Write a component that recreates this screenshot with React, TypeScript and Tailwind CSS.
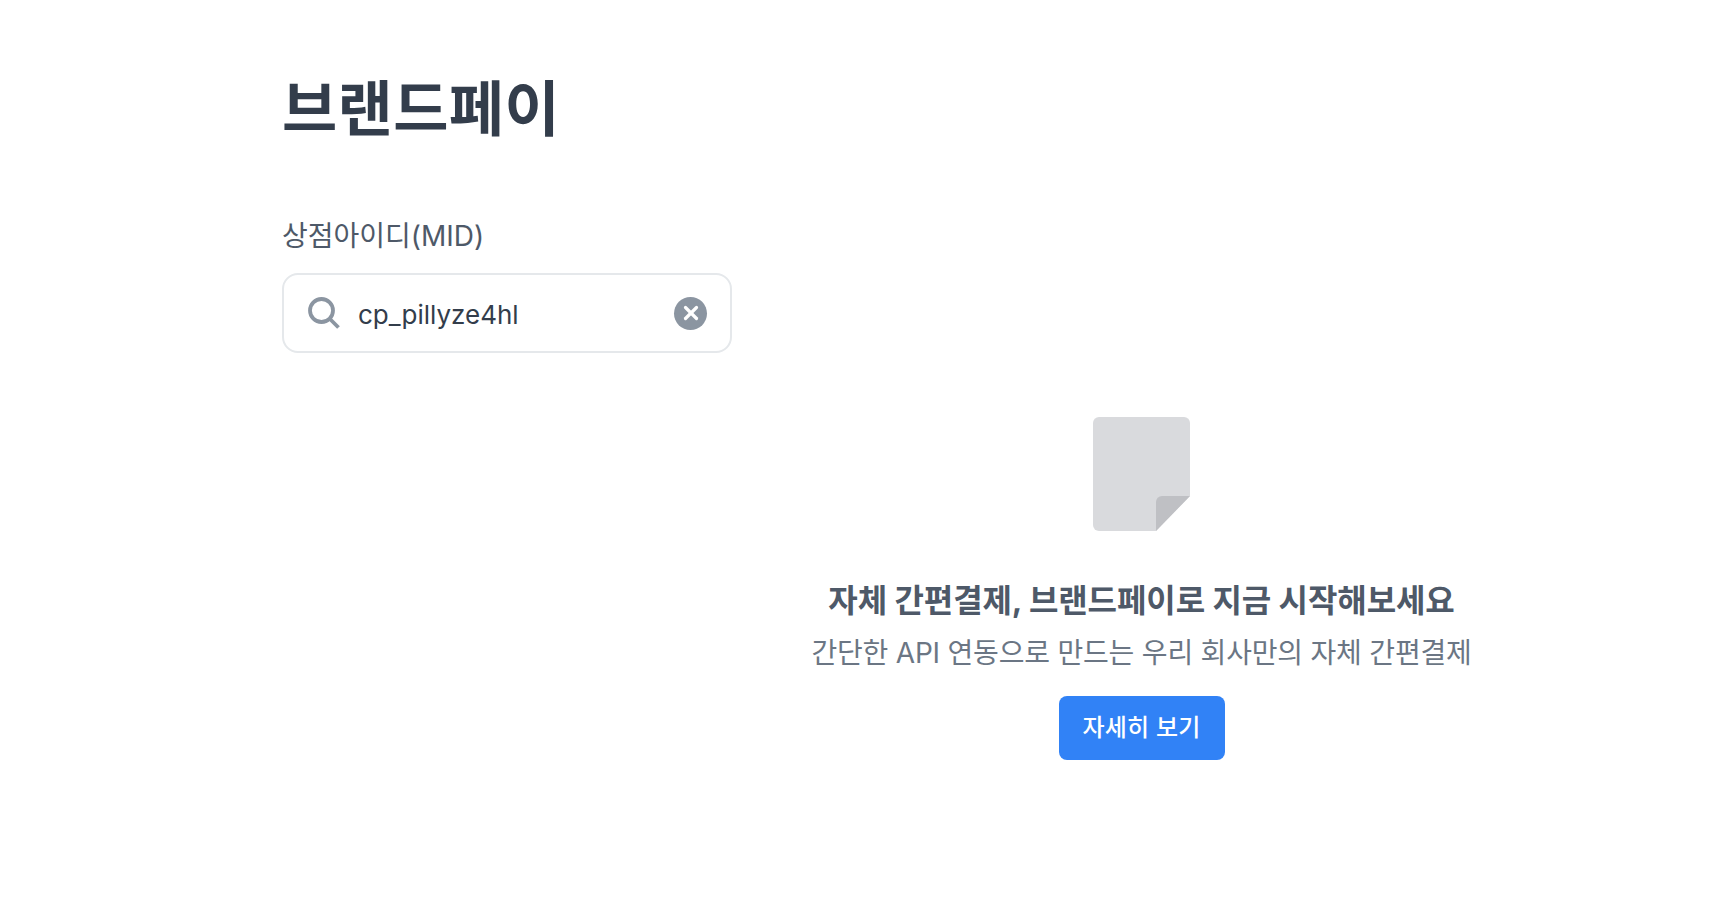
import { X } from 'lucide-react'

export default function App() {
  return (
    <div className="min-h-[922px] bg-white pl-[282px] pt-[67px] font-['Inter','Noto_Sans_CJK_KR',sans-serif]">
      <h1 className="text-[60px] leading-[84px] font-bold tracking-[0.4px] text-[#333d4b]">브랜드페이</h1>

      <div className="flex">
        <div className="w-[450px] shrink-0 pt-[65px]">
          <label className="block text-[28px] leading-[40px] text-[#4e5968]">상점아이디(MID)</label>
          <div className="mt-[17px] flex h-[80px] items-center rounded-[16px] border-2 border-[#e5e8eb] pl-[24px] pr-[23px]">
            <svg width="32" height="32" viewBox="0 0 32 32" fill="none" className="shrink-0">
              <circle cx="13.5" cy="13.5" r="11.5" stroke="#8b95a1" strokeWidth="3.8" />
              <path d="M22 22l8.5 8.5" stroke="#8b95a1" strokeWidth="3.8" />
            </svg>
            <span className="ml-[18px] flex-1 pt-[2px] text-[26px] text-[#333d4b]">cp_pillyze4hl</span>
            <div className="flex h-[33px] w-[33px] items-center justify-center rounded-full bg-[#8b95a1]">
              <X size={22} strokeWidth={3.5} className="text-white" />
            </div>
          </div>
        </div>

        <div className="flex w-[819px] flex-col items-center pt-[266px]">
          <svg width="97" height="114" viewBox="0 0 97 114" fill="none">
            <path d="M6 0h85a6 6 0 0 1 6 6v73l-34 35H6a6 6 0 0 1-6-6V6a6 6 0 0 1 6-6z" fill="#d9dadd" />
            <path d="M97 79H69a6 6 0 0 0-6 6v29z" fill="#bfc0c4" />
          </svg>
          <h2 className="mt-[46px] text-[32px] leading-[48px] font-bold tracking-[-0.1px] text-[#4e5968]">자체 간편결제, 브랜드페이로 지금 시작해보세요</h2>
          <p className="mt-[6px] text-[28px] leading-[44px] tracking-[-0.2px] text-[#6b7684]">간단한 API 연동으로 만드는 우리 회사만의 자체 간편결제</p>
          <button className="mt-[21px] h-[64px] w-[166px] rounded-[8px] bg-[#3182f6] text-[24px] font-medium tracking-[0.2px] text-white">자세히 보기</button>
        </div>
      </div>
    </div>
  )
}
